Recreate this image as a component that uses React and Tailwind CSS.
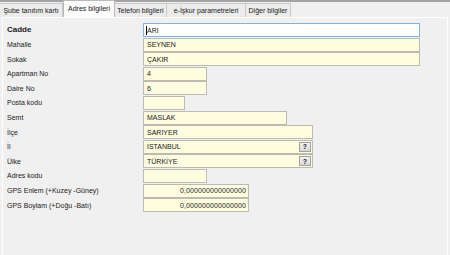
import React from "react";

const tabs = [
  { t: "Şube tanıtım kartı", w: 63 },
  { t: "Adres bilgileri", w: 52, sel: true },
  { t: "Telefon bilgileri", w: 52 },
  { t: "e-İşkur parametreleri", w: 79 },
  { t: "Diğer bilgiler", w: 45 },
];

const rows = [
  { l: "Cadde", v: "ARI", w: 277, bold: true, focus: true },
  { l: "Mahalle", v: "SEYNEN", w: 277 },
  { l: "Sokak", v: "ÇAKIR", w: 277 },
  { l: "Apartman No", v: "4", w: 64 },
  { l: "Daire No", v: "6", w: 64 },
  { l: "Posta kodu", v: "", w: 42 },
  { l: "Semt", v: "MASLAK", w: 144 },
  { l: "İlçe", v: "SARIYER", w: 170 },
  { l: "İl", v: "İSTANBUL", w: 170, q: true },
  { l: "Ülke", v: "TÜRKİYE", w: 170, q: true },
  { l: "Adres kodu", v: "", w: 64 },
  { l: "GPS Enlem (+Kuzey -Güney)", v: "0,000000000000000", w: 106, right: true },
  { l: "GPS Boylam (+Doğu -Batı)", v: "0,000000000000000", w: 106, right: true },
];

export default function App() {
  return (
    <div
      className="w-[450px] h-[255px] overflow-hidden bg-[#f0f0f0] text-[7px] text-[#1a1a1a]"
      style={{ fontFamily: '"Liberation Sans", Arial, sans-serif' }}
    >
      <div className="relative h-[17px] border-t-[2px] border-[#a3a3a3]">
        <div className="flex items-end h-full pl-[0px]">
          {tabs.map((tb) =>
            tb.sel ? (
              <div
                key={tb.t}
                className="relative z-10 -mt-[2px] flex h-[17px] items-center justify-center border-x border-t border-[#b9b9b9] bg-[#fbfbfb] leading-none"
                style={{ width: tb.w }}
              >
                <span className="-mt-[2px]">{tb.t}</span>
              </div>
            ) : (
              <div
                key={tb.t}
                className="flex h-[14px] items-center justify-center border-r border-t border-[#c9c9c9] bg-[#ececec] leading-none"
                style={{ width: tb.w }}
              >
                {tb.t}
              </div>
            )
          )}
        </div>
      </div>
      <div className="ml-[2px] mr-[2px] h-[240px] border-l border-t border-r border-[#ffffff] bg-[#f0f0f0] pt-[5px]">
        <div className="flex flex-col gap-y-[0.6px]">
          {rows.map((r) => (
            <div key={r.l} className="flex h-[14px] items-center">
              <div
                className={`w-[140px] pl-[4px] leading-none ${
                  r.bold ? "text-[8px] font-bold" : ""
                }`}
              >
                {r.l}
              </div>
              <div
                className={`relative flex h-[14px] items-center border leading-none ${
                  r.focus
                    ? "border-[#7fb2e5] bg-white"
                    : "border-[#bdbab2] bg-[#fffde0]"
                } ${r.right ? "justify-end pr-[2px]" : "pl-[3px]"}`}
                style={{ width: r.w }}
              >
                {r.focus && (
                  <span className="absolute left-[2px] top-[2px] h-[9px] w-[1px] bg-black" />
                )}
                <span className={r.right ? "tracking-[0.1px]" : ""}>{r.v}</span>
                {r.q && (
                  <span className="absolute right-[1px] top-[1px] flex h-[10px] w-[12px] items-center justify-center border border-[#a0a0a0] bg-gradient-to-b from-[#f4f4f4] to-[#d8d8d8] text-[7px] font-bold leading-none text-[#222]">
                    ?
                  </span>
                )}
              </div>
            </div>
          ))}
        </div>
      </div>
    </div>
  );
}
